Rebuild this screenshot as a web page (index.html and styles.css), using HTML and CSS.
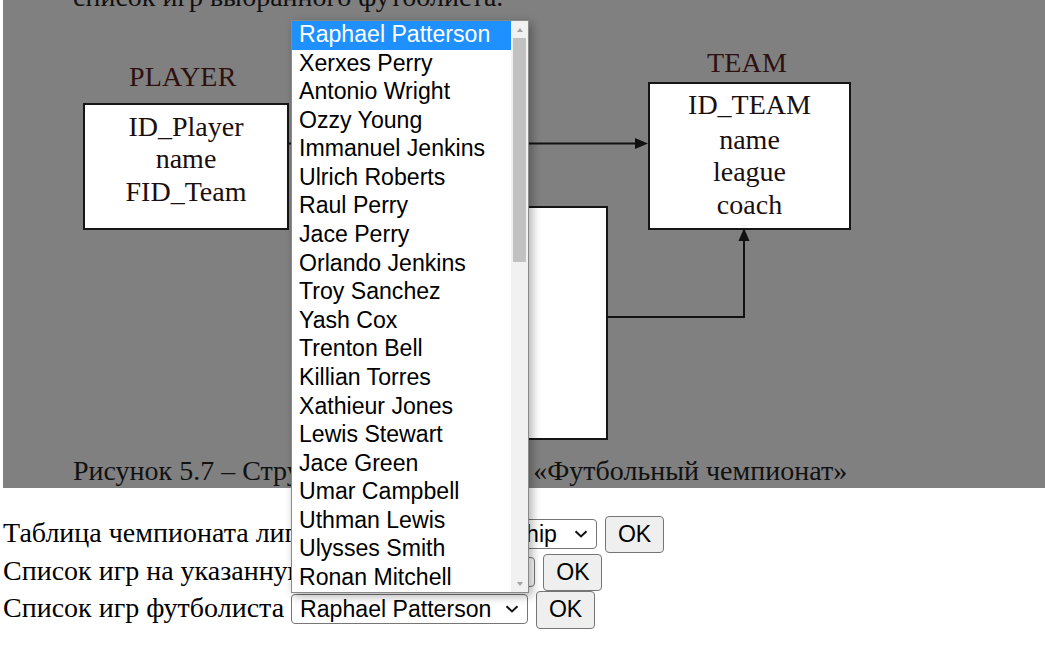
FILE: index.html
```html
<!DOCTYPE html>
<html lang="ru">
<head>
<meta charset="utf-8">
<title>Футбольный чемпионат</title>
<link rel="stylesheet" href="styles.css">
</head>
<body>
<div class="figure">
  <p class="fig-top">список игр выбранного футболиста.</p>
  <div class="diagram">
    <div class="label label-player">PLAYER</div>
    <div class="entity entity-player">
      <div>ID_Player</div>
      <div>name</div>
      <div>FID_Team</div>
    </div>
    <div class="entity entity-game"></div>
    <div class="label label-team">TEAM</div>
    <div class="entity entity-team">
      <div class="key">ID_TEAM</div>
      <div>name</div>
      <div>league</div>
      <div>coach</div>
    </div>
    <svg class="links" width="1042" height="488" viewBox="0 0 1042 488">
      <path d="M285 143.5 H634" stroke="#111" stroke-width="2" fill="none"/>
      <path d="M632 138 L645 143.5 L632 149 Z" fill="#111"/>
      <path d="M603 317 H741 V240" stroke="#111" stroke-width="2" fill="none"/>
      <path d="M735.5 241 L741 228 L746.5 241 Z" fill="#111"/>
    </svg>
  </div>
  <p class="fig-caption">Рисунок 5.7 – Структура базы данных «Футбольный чемпионат»</p>
</div>

<div class="queries">
  <div class="row">
    <span class="row-label">Таблица чемпионата лиги</span>
    <span class="select-wrap">
      <select class="select select-league"><option>English Championship</option></select>
      <svg class="chevron" width="14" height="8" viewBox="0 0 14 8"><path d="M1.5 1.2 L7 6.4 L12.5 1.2" fill="none" stroke="#111" stroke-width="2"/></svg>
    </span>
    <button class="ok" type="button">OK</button>
  </div>
  <div class="row">
    <span class="row-label">Список игр на указанную дату</span>
    <span class="select-wrap">
      <select class="select select-date"><option>2023-05-14</option></select>
      <svg class="chevron" width="14" height="8" viewBox="0 0 14 8"><path d="M1.5 1.2 L7 6.4 L12.5 1.2" fill="none" stroke="#111" stroke-width="2"/></svg>
    </span>
    <button class="ok" type="button">OK</button>
  </div>
  <div class="row">
    <span class="row-label">Список игр футболиста</span>
    <span class="select-wrap">
      <select class="select select-player"><option>Raphael Patterson</option></select>
      <svg class="chevron" width="14" height="8" viewBox="0 0 14 8"><path d="M1.5 1.2 L7 6.4 L12.5 1.2" fill="none" stroke="#111" stroke-width="2"/></svg>
    </span>
    <button class="ok" type="button">OK</button>
  </div>
</div>

<div class="popup">
  <ul class="options">
    <li class="option selected">Raphael Patterson</li>
    <li class="option">Xerxes Perry</li>
    <li class="option">Antonio Wright</li>
    <li class="option">Ozzy Young</li>
    <li class="option">Immanuel Jenkins</li>
    <li class="option">Ulrich Roberts</li>
    <li class="option">Raul Perry</li>
    <li class="option">Jace Perry</li>
    <li class="option">Orlando Jenkins</li>
    <li class="option">Troy Sanchez</li>
    <li class="option">Yash Cox</li>
    <li class="option">Trenton Bell</li>
    <li class="option">Killian Torres</li>
    <li class="option">Xathieur Jones</li>
    <li class="option">Lewis Stewart</li>
    <li class="option">Jace Green</li>
    <li class="option">Umar Campbell</li>
    <li class="option">Uthman Lewis</li>
    <li class="option">Ulysses Smith</li>
    <li class="option">Ronan Mitchell</li>
  </ul>
  <div class="scrollbar">
    <div class="sb-btn"><span class="tri tri-up"></span></div>
    <div class="sb-track"><div class="sb-thumb"></div></div>
    <div class="sb-btn"><span class="tri tri-down"></span></div>
  </div>
</div>
</body>
</html>
```

FILE: styles.css
```css
html, body {
  margin: 0;
  padding: 0;
}

body {
  position: relative;
  width: 1045px;
  height: 670px;
  overflow: hidden;
  padding-left: 3px;
  box-sizing: border-box;
  background: #ffffff;
  color: #000000;
  font-family: "Liberation Serif", "Times New Roman", serif;
  font-size: 28px;
}

/* ---------- figure (scanned diagram) ---------- */
.figure {
  position: relative;
  width: 1042px;
  height: 488px;
  background: #808080;
  overflow: hidden;
  display: flex;
  flex-direction: column;
  justify-content: space-between;
}

.fig-top {
  margin: -19px 0 0 70px;
  line-height: 31px;
  color: #111;
  white-space: nowrap;
}

.fig-caption {
  margin: 0 0 2px 70px;
  line-height: 31px;
  color: #111;
  white-space: nowrap;
}

.diagram {
  position: absolute;
  inset: 0;
}

.label {
  position: absolute;
  font-size: 28px;
  line-height: 31px;
  color: #2e1010;
  letter-spacing: 0.2px;
}

.label-player {
  left: 126px;
  top: 61px;
}

.label-team {
  left: 704px;
  top: 47px;
}

.entity {
  position: absolute;
  box-sizing: border-box;
  background: #ffffff;
  border: 2px solid #151515;
  text-align: center;
  color: #1a0e0e;
  font-size: 28px;
  line-height: 32.5px;
}

.entity-player {
  left: 80px;
  top: 103px;
  width: 206px;
  height: 127px;
  padding-top: 6px;
  line-height: 32.3px;
}

.entity-team {
  left: 645px;
  top: 82px;
  width: 203px;
  height: 148px;
  padding-top: 5px;
}

.entity-team .key {
  margin-bottom: 2px;
}

.entity-game {
  left: 417px;
  top: 206px;
  width: 188px;
  height: 234px;
}

.links {
  position: absolute;
  left: 0;
  top: 0;
}

/* ---------- query rows ---------- */
.queries {
  padding-top: 28px;
}

.row {
  display: flex;
  align-items: baseline;
  gap: 7px;
  height: 37.65px;
  white-space: nowrap;
}

.row-label {
  font-size: 28px;
  line-height: 31px;
}

.select-wrap {
  position: relative;
  display: inline-flex;
}

.select {
  appearance: none;
  -webkit-appearance: none;
  box-sizing: border-box;
  height: 30px;
  margin: 0;
  padding: 0 0 0 8px;
  border: 1px solid #767676;
  border-radius: 4px;
  background: #ffffff;
  color: #000000;
  font-family: "Liberation Sans", Arial, sans-serif;
  font-size: 23.1px;
}

.select-league { width: 279px; }
.select-date { width: 161px; }
.select-player { width: 237px; }

.chevron {
  position: absolute;
  right: 9px;
  top: 11px;
  pointer-events: none;
}

.ok {
  box-sizing: border-box;
  width: 59px;
  height: 37.4px;
  margin: 0 0 0 1px;
  padding: 0;
  border: 1px solid #767676;
  border-radius: 4px;
  background: #efefef;
  color: #000000;
  font-family: "Liberation Sans", Arial, sans-serif;
  font-size: 23.1px;
}

/* ---------- open select popup ---------- */
.popup {
  position: absolute;
  left: 291px;
  top: 20px;
  width: 238px;
  height: 573px;
  box-sizing: border-box;
  display: flex;
  background: #ffffff;
  border: 1px solid #8a8a8a;
  box-shadow: 3px 3px 9px rgba(0, 0, 0, 0.32);
}

.options {
  flex: 1;
  margin: 0;
  padding: 0;
  list-style: none;
  overflow: hidden;
}

.option {
  box-sizing: border-box;
  height: 28.58px;
  padding: 1px 0 2px 7px;
  font-family: "Liberation Sans", Arial, sans-serif;
  font-size: 23.1px;
  line-height: 25.6px;
  color: #000000;
  white-space: nowrap;
}

.option.selected {
  background: #1e90ff;
  color: #ffffff;
}

.scrollbar {
  width: 17px;
  display: flex;
  flex-direction: column;
  background: #f1f1f1;
}

.sb-btn {
  height: 17px;
  display: flex;
  align-items: center;
  justify-content: center;
}

.sb-track {
  flex: 1;
}

.sb-thumb {
  height: 224px;
  margin: 0 2px;
  background: #c1c1c1;
}

.tri {
  width: 0;
  height: 0;
  border-left: 3.5px solid transparent;
  border-right: 3.5px solid transparent;
}

.tri-up {
  border-bottom: 4px solid #a3a3a3;
}

.tri-down {
  border-top: 4px solid #a3a3a3;
}
```
